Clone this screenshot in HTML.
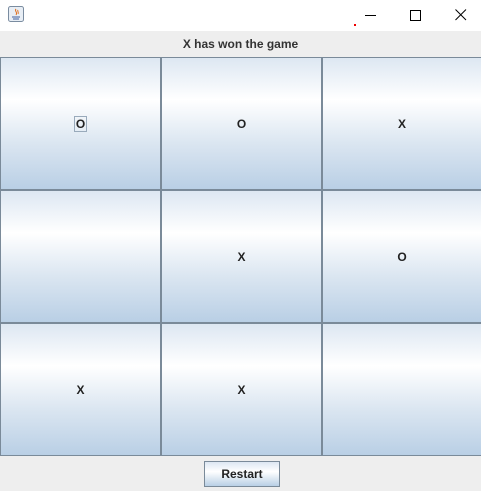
<!DOCTYPE html><html><head><style>
body{margin:0;width:481px;height:491px;background:#eeeeee;position:relative;overflow:hidden;font-family:"Liberation Sans",sans-serif}
.tb{position:absolute;left:0;top:0;width:481px;height:31px;background:#fff}
.lbl{position:absolute;top:37px;left:0;width:481px;text-align:center;font-size:12px;font-weight:bold;color:#333}
.grid{position:absolute;left:0;top:57px;width:481px;height:399px;background:#7a8a99}
.c{position:absolute;background:linear-gradient(#dde7f2 0%,#fff 32%,#dbe6f1 65%,#b9cfe5 100%);display:flex;align-items:center;justify-content:center;font-size:12px;font-weight:bold;color:#222}
.btn{position:absolute;left:204px;top:461px;width:74px;height:24px;border:1px solid #7a8a99;background:linear-gradient(#dde7f2,#fff 40%,#b9cfe5);font-size:12px;font-weight:bold;color:#222;text-align:center;line-height:24px}
</style></head><body>
<div class="tb">
<svg style="position:absolute;left:8px;top:6px" width="17" height="17"><rect x="0.5" y="0.5" width="15" height="15" rx="2" fill="#e8eef5" stroke="#7a8ca0"/><path d="M8 3c-2 2 2 3 0 6M10 4c-1 1 1 2 0 4" stroke="#e07020" fill="none"/><path d="M4 11h8M5 13h6" stroke="#4060a0"/></svg>
<div style="position:absolute;left:365px;top:15px;width:11px;height:1px;background:#000"></div>
<div style="position:absolute;left:410px;top:10px;width:9px;height:9px;border:1px solid #000"></div>
<svg style="position:absolute;left:455px;top:9px" width="12" height="12"><path d="M0.5 0.5L11 11M11 0.5L0.5 11" stroke="#000"/></svg>
<div style="position:absolute;left:354px;top:24px;width:2px;height:2px;background:#e00"></div>
</div>
<div class="lbl">X has won the game</div>
<div class="grid">
<div class="c" style="left:1px;top:1px;width:159px;height:131px"><span style="border:1px solid #9ab;padding:0 1px">O</span></div>
<div class="c" style="left:162px;top:1px;width:159px;height:131px">O</div>
<div class="c" style="left:323px;top:1px;width:158px;height:131px">X</div>
<div class="c" style="left:1px;top:134px;width:159px;height:131px"></div>
<div class="c" style="left:162px;top:134px;width:159px;height:131px">X</div>
<div class="c" style="left:323px;top:134px;width:158px;height:131px">O</div>
<div class="c" style="left:1px;top:267px;width:159px;height:131px">X</div>
<div class="c" style="left:162px;top:267px;width:159px;height:131px">X</div>
<div class="c" style="left:323px;top:267px;width:158px;height:131px"></div>
</div>
<div class="btn">Restart</div>
</body></html>
